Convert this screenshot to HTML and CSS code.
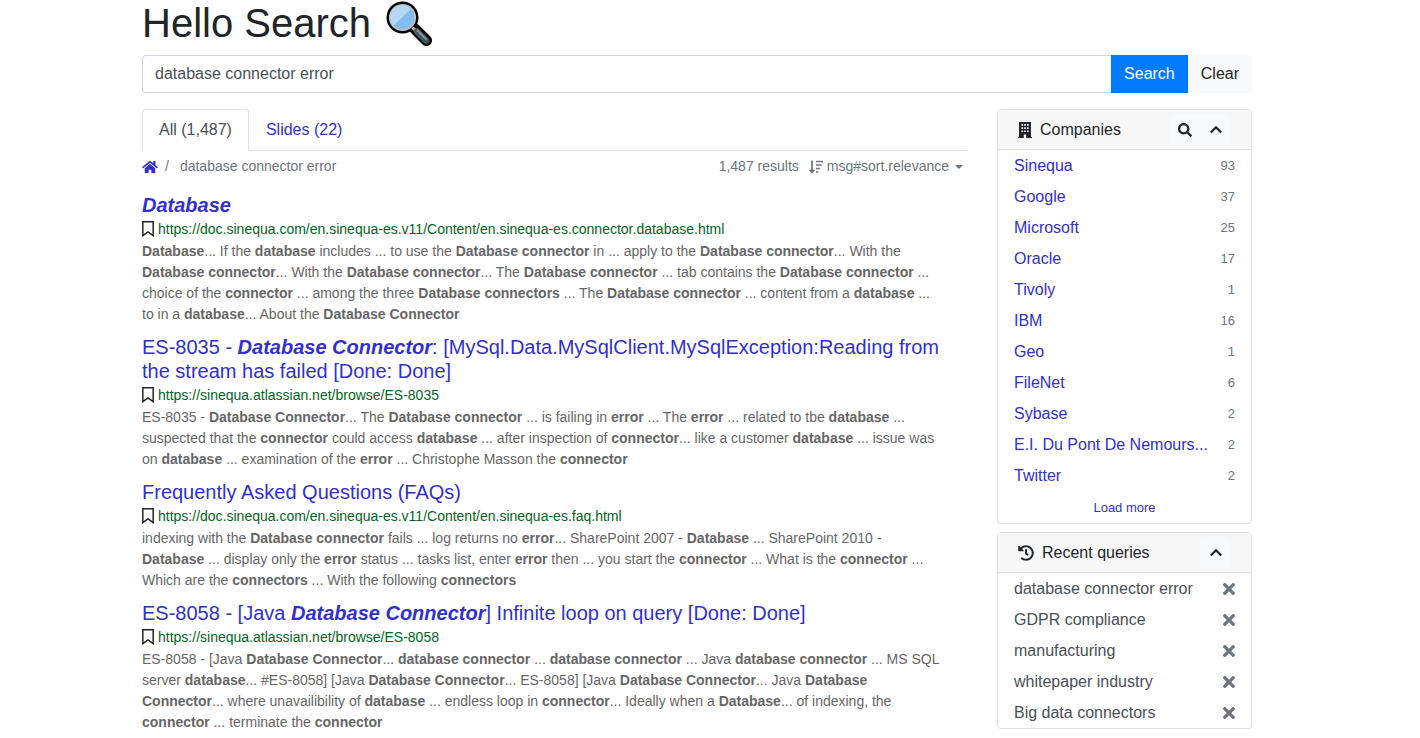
FILE: index.html
```html
<!DOCTYPE html>
<html lang="en">
<head>
<meta charset="utf-8">
<meta name="viewport" content="width=device-width, initial-scale=1">
<title>Hello Search</title>
<link rel="stylesheet" href="styles.css">
</head>
<body>
<svg class="defs" width="0" height="0" aria-hidden="true">
  <symbol id="bookmark" viewBox="0 0 12 16"><path d="M.8.800h10.400v13.900L6 10.900.8 14.700z" fill="none" stroke="currentColor" stroke-width="1.500"/></symbol>
  <symbol id="times" viewBox="0 0 352 512"><path fill="currentColor" d="M242.72 256l100.07-100.07c12.28-12.28 12.28-32.19 0-44.48l-22.24-22.24c-12.28-12.28-32.19-12.28-44.48 0L176 189.28 75.93 89.21c-12.28-12.28-32.19-12.28-44.48 0L9.21 111.45c-12.28 12.28-12.28 32.19 0 44.48L109.28 256 9.21 356.07c-12.28 12.28-12.28 32.19 0 44.48l22.24 22.24c12.28 12.28 32.2 12.28 44.48 0L176 322.72l100.07 100.07c12.28 12.28 32.2 12.28 44.48 0l22.24-22.24c12.28-12.28 12.28-32.19 0-44.48L242.72 256z"/></symbol>
  <symbol id="chevron" viewBox="0 0 14 16"><path d="M1.8 10.500 7 5.300l5.200 5.200" fill="none" stroke="currentColor" stroke-width="2.200"/></symbol>
</svg>
<div class="container">
  <h1 class="title">Hello Search
    <svg class="title-icon" viewBox="0 0 46 46" aria-hidden="true">
      <path d="M29 28 40.500 39.500" stroke="#000" stroke-width="11" stroke-linecap="round"/>
      <path d="M25 25l5 5" stroke="#000" stroke-width="6"/>
      <circle cx="16.500" cy="16.500" r="16" fill="#000"/>
      <circle cx="16.500" cy="16.500" r="13.600" fill="#c2c4c6"/>
      <circle cx="16.500" cy="16.500" r="11.800" fill="#83bdec"/>
      <path d="M7.500 24.500A11.800 11.800 0 0 1 24.800 8.200z" fill="#b3d9f5"/>
      <path d="M26.500 26.500l4 4" stroke="#b9bdc0" stroke-width="3"/>
      <path d="M31 30.500l9 9" stroke="#4b565c" stroke-width="6.500" stroke-linecap="round"/>
      <path d="M31.500 29.500l8.500 8.500" stroke="#87939a" stroke-width="2" stroke-linecap="round"/>
    </svg>
  </h1>
  <form class="search" role="search" onsubmit="return false">
    <input class="search-input" type="text" value="database connector error" aria-label="Search text">
    <button class="btn btn-primary" type="submit">Search</button>
    <button class="btn btn-light" type="button">Clear</button>
  </form>
  <div class="row">
    <main class="main">
      <nav class="tabs">
        <a class="tab tab-active" href="#all">All (1,487)</a>
        <a class="tab" href="#slides">Slides (22)</a>
      </nav>
      <div class="toolbar">
        <nav class="crumbs" aria-label="Breadcrumb">
          <a class="home" href="#home" aria-label="Home"><svg width="16" height="14" viewBox="0 0 576 512"><path fill="currentColor" d="M280.37 148.26L96 300.11V464a16 16 0 0 0 16 16l112.06-.29a16 16 0 0 0 15.92-16V368a16 16 0 0 1 16-16h64a16 16 0 0 1 16 16v95.64a16 16 0 0 0 16 16.050L464 480a16 16 0 0 0 16-16V300L295.67 148.26a12.190 12.190 0 0 0-15.300 0zM571.600 251.470L488 182.560V44.050a12 12 0 0 0-12-12h-56a12 12 0 0 0-12 12v72.610L318.470 43a48 48 0 0 0-61 0L4.340 251.470a12 12 0 0 0-1.600 16.900l25.500 31A12 12 0 0 0 45.150 301l235.220-193.740a12.190 12.190 0 0 1 15.300 0L530.900 301a12 12 0 0 0 16.900-1.600l25.500-31a12 12 0 0 0-1.700-16.930z"/></svg></a>
          <span>/</span>
          <span>database connector error</span>
        </nav>
        <div class="sort">
          <span>1,487 results</span>
          <button class="sort-button" type="button">
            <svg width="14" height="14" viewBox="0 0 14 14" aria-hidden="true"><path d="M3 .5V12M.6 9.800 3 12.500l2.400-2.700M7 1.500h7M7 5h5.500M7 8.500h4M7 12h2.300" fill="none" stroke="currentColor" stroke-width="1.700"/></svg>
            msg#sort.relevance
            <span class="caret"></span>
          </button>
        </div>
      </div>

      <article class="result">
        <h2 class="result-title"><a href="#r1"><b><i>Database</i></b></a></h2>
        <div class="source"><svg class="mark" aria-hidden="true"><use href="#bookmark"/></svg><a href="#u1">https://doc.sinequa.com/en.sinequa-es.v11/Content/en.sinequa-es.connector.database.html</a></div>
        <p class="extract"><b>Database</b>... If the <b>database</b> includes ... to use the <b>Database connector</b> in ... apply to the <b>Database connector</b>... With the<br><b>Database connector</b>... With the <b>Database connector</b>... The <b>Database connector</b> ... tab contains the <b>Database connector</b> ...<br>choice of the <b>connector</b> ... among the three <b>Database connectors</b> ... The <b>Database connector</b> ... content from a <b>database</b> ...<br>to in a <b>database</b>... About the <b>Database Connector</b></p>
      </article>
      <article class="result">
        <h2 class="result-title"><a href="#r2">ES-8035 - <b><i>Database Connector</i></b>: [MySql.Data.MySqlClient.MySqlException:Reading from<br>the stream has failed [Done: Done]</a></h2>
        <div class="source"><svg class="mark" aria-hidden="true"><use href="#bookmark"/></svg><a href="#u2">https://sinequa.atlassian.net/browse/ES-8035</a></div>
        <p class="extract">ES-8035 - <b>Database Connector</b>... The <b>Database connector</b> ... is failing in <b>error</b> ... The <b>error</b> ... related to tbe <b>database</b> ...<br>suspected that the <b>connector</b> could access <b>database</b> ... after inspection of <b>connector</b>... like a customer <b>database</b> ... issue was<br>on <b>database</b> ... examination of the <b>error</b> ... Christophe Masson the <b>connector</b></p>
      </article>
      <article class="result">
        <h2 class="result-title"><a href="#r3">Frequently Asked Questions (FAQs)</a></h2>
        <div class="source"><svg class="mark" aria-hidden="true"><use href="#bookmark"/></svg><a href="#u3">https://doc.sinequa.com/en.sinequa-es.v11/Content/en.sinequa-es.faq.html</a></div>
        <p class="extract">indexing with the <b>Database connector</b> fails ... log returns no <b>error</b>... SharePoint 2007 - <b>Database</b> ... SharePoint 2010 -<br><b>Database</b> ... display only the <b>error</b> status ... tasks list, enter <b>error</b> then ... you start the <b>connector</b> ... What is the <b>connector</b> ...<br>Which are the <b>connectors</b> ... With the following <b>connectors</b></p>
      </article>
      <article class="result">
        <h2 class="result-title"><a href="#r4">ES-8058 - [Java <b><i>Database Connector</i></b>] Infinite loop on query [Done: Done]</a></h2>
        <div class="source"><svg class="mark" aria-hidden="true"><use href="#bookmark"/></svg><a href="#u4">https://sinequa.atlassian.net/browse/ES-8058</a></div>
        <p class="extract">ES-8058 - [Java <b>Database Connector</b>... <b>database connector</b> ... <b>database connector</b> ... Java <b>database connector</b> ... MS SQL<br>server <b>database</b>... #ES-8058] [Java <b>Database Connector</b>... ES-8058] [Java <b>Database Connector</b>... Java <b>Database</b><br><b>Connector</b>... where unavailibility of <b>database</b> ... endless loop in <b>connector</b>... Ideally when a <b>Database</b>... of indexing, the<br><b>connector</b> ... terminate the <b>connector</b></p>
      </article>
    </main>

    <aside class="side">
      <section class="card">
        <header class="card-header">
          <svg class="card-icon" width="14" height="16" viewBox="0 0 14 16" aria-hidden="true"><path fill="currentColor" fill-rule="evenodd" d="M1 0h12v15h1v1H8.200v-3.500H5.800V16H0v-1h1zM3.400 2v1.700h1.700V2zm2.800 0v1.700h1.700V2zM9 2v1.700h1.700V2zM3.400 5.200v1.700h1.700V5.200zm2.800 0v1.700h1.700V5.200zm2.800 0v1.700h1.700V5.200zM3.400 8.400v1.700h1.700V8.400zm2.800 0v1.700h1.700V8.400zm2.800 0v1.700h1.700V8.400z"/></svg>
          <h3 class="card-title">Companies</h3>
          <div class="actions">
            <button class="action" type="button" aria-label="Search companies"><svg width="14" height="14" viewBox="0 0 512 512"><path fill="currentColor" d="M505 442.700L405.300 343c-4.500-4.500-10.600-7-17-7H372c27.600-35.300 44-79.700 44-128C416 93.100 322.900 0 208 0S0 93.100 0 208s93.100 208 208 208c48.300 0 92.700-16.400 128-44v16.300c0 6.400 2.500 12.500 7 17l99.700 99.700c9.400 9.400 24.600 9.400 33.900 0l28.300-28.300c9.400-9.400 9.400-24.600.1-34zM208 336c-70.700 0-128-57.200-128-128 0-70.700 57.200-128 128-128 70.700 0 128 57.200 128 128 0 70.700-57.200 128-128 128z"/></svg></button>
            <button class="action" type="button" aria-label="Collapse companies"><svg width="14" height="16"><use href="#chevron"/></svg></button>
          </div>
        </header>
        <ul class="list">
          <li class="item"><a href="#c1">Sinequa</a><span class="count">93</span></li>
          <li class="item"><a href="#c2">Google</a><span class="count">37</span></li>
          <li class="item"><a href="#c3">Microsoft</a><span class="count">25</span></li>
          <li class="item"><a href="#c4">Oracle</a><span class="count">17</span></li>
          <li class="item"><a href="#c5">Tivoly</a><span class="count">1</span></li>
          <li class="item"><a href="#c6">IBM</a><span class="count">16</span></li>
          <li class="item"><a href="#c7">Geo</a><span class="count">1</span></li>
          <li class="item"><a href="#c8">FileNet</a><span class="count">6</span></li>
          <li class="item"><a href="#c9">Sybase</a><span class="count">2</span></li>
          <li class="item"><a href="#c10">E.I. Du Pont De Nemours...</a><span class="count">2</span></li>
          <li class="item"><a href="#c11">Twitter</a><span class="count">2</span></li>
        </ul>
        <a class="more" href="#more">Load more</a>
      </section>
      <section class="card">
        <header class="card-header">
          <svg class="card-icon" width="16" height="16" viewBox="0 0 512 512" aria-hidden="true"><path fill="currentColor" d="M504 255.531c.253 136.640-111.180 248.372-247.820 248.468-59.015.042-113.223-20.530-155.822-54.911-11.077-8.940-11.905-25.541-1.839-35.607l11.267-11.267c8.609-8.609 22.353-9.551 31.891-1.984C173.062 425.135 212.781 440 256 440c101.705 0 184-82.311 184-184 0-101.705-82.311-184-184-184-48.814 0-93.149 18.969-126.068 49.932l50.754 50.754c10.080 10.080 2.941 27.314-11.313 27.314H24c-8.837 0-16-7.163-16-16V38.627c0-14.254 17.234-21.393 27.314-11.314l49.372 49.372C129.209 34.136 189.552 8 256 8c136.810 0 247.747 110.780 248 247.531zm-180.912 78.784l9.823-12.630c8.138-10.463 6.253-25.542-4.210-33.679L288 256.349V152c0-13.255-10.745-24-24-24h-16c-13.255 0-24 10.745-24 24v135.651l65.409 50.874c10.463 8.137 25.541 6.253 33.679-4.210z"/></svg>
          <h3 class="card-title">Recent queries</h3>
          <div class="actions">
            <button class="action" type="button" aria-label="Collapse recent queries"><svg width="14" height="16"><use href="#chevron"/></svg></button>
          </div>
        </header>
        <ul class="list">
          <li class="item"><a class="query" href="#q1">database connector error</a><button class="remove" type="button" aria-label="Remove database connector error"><svg width="12" height="18"><use href="#times"/></svg></button></li>
          <li class="item"><a class="query" href="#q2">GDPR compliance</a><button class="remove" type="button" aria-label="Remove GDPR compliance"><svg width="12" height="18"><use href="#times"/></svg></button></li>
          <li class="item"><a class="query" href="#q3">manufacturing</a><button class="remove" type="button" aria-label="Remove manufacturing"><svg width="12" height="18"><use href="#times"/></svg></button></li>
          <li class="item"><a class="query" href="#q4">whitepaper industry</a><button class="remove" type="button" aria-label="Remove whitepaper industry"><svg width="12" height="18"><use href="#times"/></svg></button></li>
          <li class="item"><a class="query" href="#q5">Big data connectors</a><button class="remove" type="button" aria-label="Remove Big data connectors"><svg width="12" height="18"><use href="#times"/></svg></button></li>
        </ul>
      </section>
    </aside>
  </div>
</div>
</body>
</html>
```

FILE: styles.css
```css
* { box-sizing: border-box; }

body {
  margin: 0;
  padding-right: 26px;
  background: #fff;
  color: #212529;
  font: 16px/24px "Liberation Sans", Arial, sans-serif;
}

a { color: #3130cf; text-decoration: none; }
a:hover { text-decoration: underline; }
button { font: inherit; color: inherit; border: 0; padding: 0; background: none; cursor: pointer; }
svg { flex: none; }

.defs { position: absolute; }
.container { max-width: 1140px; margin: 0 auto; padding: 0 15px; }

.title {
  display: flex;
  align-items: center;
  gap: 15px;
  margin: 0 0 8px;
  font-size: 40px;
  font-weight: 400;
  line-height: 47px;
}
.title-icon { width: 46px; height: 46px; }

.search { display: flex; margin-bottom: 16px; }
.search-input {
  flex: 1;
  min-width: 0;
  height: 38px;
  padding: 6px 12px;
  border: 1px solid #ced4da;
  border-right: 0;
  border-radius: 4px 0 0 4px;
  color: #495057;
  font: inherit;
}
.btn { padding: 6px 13px; height: 38px; }
.btn-primary { background: #007bff; color: #fff; }
.btn-light { background: #f8f9fa; border-radius: 0 4px 4px 0; }

.row { display: grid; grid-template-columns: minmax(0, 1fr) 255px; gap: 30px; }

.tabs { display: flex; border-bottom: 1px solid #dee2e6; }
.tab {
  margin-bottom: -1px;
  padding: 8px 16px;
  border: 1px solid transparent;
  border-radius: 4px 4px 0 0;
}
.tab-active { color: #495057; background: #fff; border-color: #dee2e6 #dee2e6 #fff; }

.toolbar {
  display: flex;
  justify-content: space-between;
  margin-bottom: 11px;
  padding: 5px 4px 5px 0;
  color: #6c757d;
  font-size: 14px;
  line-height: 21px;
}
.crumbs { display: flex; gap: 7px; }
.crumbs span + span { margin-left: 4px; }
.home { display: flex; align-items: center; }
.sort { display: flex; gap: 10px; }
.sort-button { display: flex; align-items: center; gap: 4px; }
.caret { margin-left: 2px; border: 4px solid transparent; border-top-color: currentColor; border-bottom: 0; }

.result { margin-bottom: 10px; }
.result-title { margin: 0; font-size: 20px; font-weight: 400; line-height: 24px; }
.source { display: flex; align-items: center; gap: 4px; font-size: 14px; line-height: 24px; }
.source a { color: #006621; }
.mark { width: 12px; height: 16px; color: #212529; }
.extract { margin: 0; color: #666; font-size: 14px; line-height: 21px; }

.card { margin-bottom: 8px; border: 1px solid #dfdfdf; border-radius: 4px; }
.card-header {
  display: flex;
  align-items: center;
  gap: 8px;
  padding: 4px 20px;
  border-bottom: 1px solid #dfdfdf;
  background: #f7f7f7;
}
.card-title { margin: 0; font-size: 16px; font-weight: 400; }
.actions { display: flex; margin-left: auto; background: #f8f9fa; border-radius: 3px; }
.action { display: flex; align-items: center; justify-content: center; width: 31px; height: 31px; }

.list { margin: 0; padding: 0; list-style: none; }
.item { display: flex; align-items: center; justify-content: space-between; height: 31px; padding: 0 16px; }
.count { color: #6c757d; font-size: 13px; }
.query { color: #495057; }
.remove { display: flex; color: #6c757d; }
.more { display: block; padding: 5px 4px 3px; text-align: center; font-size: 13px; }
```
